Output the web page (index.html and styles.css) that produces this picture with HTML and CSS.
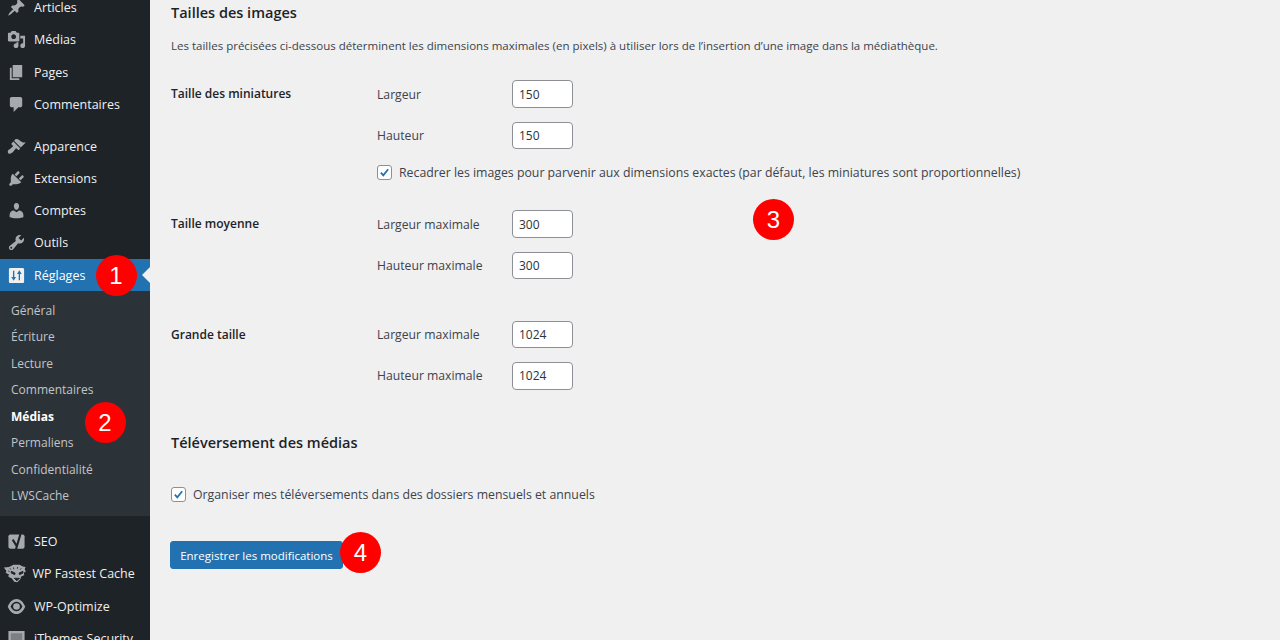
FILE: index.html
```html
<!DOCTYPE html>
<html lang="fr">
<head>
<meta charset="utf-8">
<title>Réglages des médias</title>
<link rel="stylesheet" href="styles.css">
</head>
<body>
<div class="app">
<nav class="side">
  <ul class="menu first">
    <li class="item"><svg class="ico" viewBox="0 0 20 20"><path d="M10.44 3.02l1.82-1.82 6.36 6.35-1.83 1.82c-1.05-.68-2.48-.57-3.41.36l-.75.75c-.92.93-1.04 2.35-.35 3.41l-1.83 1.82-2.41-2.41-2.8 2.79c-.42.42-3.38 2.71-3.8 2.29s1.86-3.39 2.28-3.81l2.79-2.79L4.1 9.36l1.83-1.82c1.05.69 2.48.57 3.4-.36l.75-.75c.93-.92 1.05-2.35.36-3.41z"/></svg>Articles</li>
    <li class="item"><svg class="ico" viewBox="0 0 20 20"><path d="M13 11V4c0-.55-.45-1-1-1h-1.67L9 1H5L3.67 3H2c-.55 0-1 .45-1 1v7c0 .55.45 1 1 1h10c.55 0 1-.45 1-1zM7 4.5c1.38 0 2.5 1.12 2.5 2.5S8.38 9.5 7 9.5 4.5 8.38 4.5 7 5.62 4.5 7 4.5zM14 6h5v10.5c0 1.38-1.12 2.5-2.5 2.5S14 17.88 14 16.5s1.12-2.5 2.5-2.5c.17 0 .34.02.5.05V9h-3V6zm-4 8.05V13h2v3.5c0 1.38-1.12 2.5-2.5 2.5S7 17.88 7 16.5 8.12 14 9.5 14c.17 0 .34.02.5.05z"/></svg>Médias</li>
    <li class="item"><svg class="ico" viewBox="0 0 20 20"><path d="M6 15V2h10v13H6zm-1 1h8v2H3V5h2v11z"/></svg>Pages</li>
    <li class="item"><svg class="ico" viewBox="0 0 20 20"><path d="M5 2h9c1.1 0 2 .9 2 2v7c0 1.1-.9 2-2 2h-2l-5 5v-5H5c-1.1 0-2-.9-2-2V4c0-1.1.9-2 2-2z"/></svg>Commentaires</li>
  </ul>
  <ul class="menu second">
    <li class="item"><svg class="ico" viewBox="0 0 20 20"><path d="M14.48 11.06L7.41 3.99l1.5-1.5c.5-.56 2.3-.47 3.51.32 1.21.8 1.43 1.28 2.91 2.1 1.18.64 2.45 1.26 4.45.85zm-.71.71L6.7 4.7 4.93 6.47c-.39.39-.39 1.02 0 1.41l1.06 1.06c.39.39.39 1.03 0 1.42-.6.6-1.43 1.11-2.21 1.69-.35.26-.7.53-1.01.84C1.43 13.26 0 15.6 1.4 17s3.74-.03 5.12-1.41c.31-.31.58-.66.84-1.01.58-.78 1.09-1.61 1.69-2.21.39-.39 1.02-.39 1.41 0l1.06 1.06c.39.39 1.02.39 1.41 0z"/></svg>Apparence</li>
    <li class="item"><svg class="ico" viewBox="0 0 20 20"><path d="M13.11 4.36L9.87 7.6 8 5.73l3.24-3.24c.35-.34 1.05-.2 1.56.32.52.51.66 1.21.31 1.55zm-8 1.77l.91-1.12 9.01 9.01-1.19.84c-.71.71-2.63 1.16-3.82 1.16H6.14L4.9 17.26c-.59.59-1.54.59-2.12 0-.59-.58-.59-1.53 0-2.12l1.24-1.24v-3.88c0-1.13.4-3.19 1.09-3.89zm7.26 3.97l3.24-3.24c.34-.35 1.04-.21 1.55.31.52.51.66 1.21.31 1.55l-3.24 3.25z"/></svg>Extensions</li>
    <li class="item"><svg class="ico" viewBox="0 0 20 20"><path d="M10 9.25c-2.27 0-2.73-3.44-2.73-3.44C7 4.02 7.82 2 9.97 2c2.16 0 2.98 2.02 2.71 3.81 0 0-.41 3.44-2.68 3.44zm0 2.57L12.72 10c2.39 0 4.52 2.33 4.52 4.53v2.49s-3.65 1.13-7.24 1.13c-3.65 0-7.24-1.13-7.24-1.13v-2.49c0-2.25 1.94-4.48 4.47-4.48z"/></svg>Comptes</li>
    <li class="item"><svg class="ico" viewBox="0 0 20 20"><path d="M16.68 9.77c-1.34 1.34-3.3 1.67-4.95.99l-5.41 6.52c-.99.99-2.59.99-3.58 0s-.99-2.59 0-3.57l6.52-5.42c-.68-1.65-.35-3.61.99-4.95 1.28-1.28 3.12-1.62 4.72-1.06l-2.89 2.89 2.82 2.82 2.86-2.87c.53 1.58.18 3.39-1.08 4.65zM3.81 16.21c.4.39 1.04.39 1.43 0 .4-.4.4-1.04 0-1.43-.39-.4-1.03-.4-1.43 0-.39.39-.39 1.03 0 1.43z"/></svg>Outils</li>
    <li class="item current"><svg class="ico" viewBox="0 0 20 20"><path fill-rule="evenodd" d="M3.500 2h13c.8 0 1.500.7 1.500 1.500v13c0 .8-.7 1.500-1.500 1.500h-13c-.8 0-1.500-.7-1.500-1.500v-13C2 2.700 2.700 2 3.500 2zM6.300 5v6.500H4.500L7 15.500l2.500-4H7.700V5zM13.700 15V8.500h1.800L13 4.500l-2.500 4h1.800V15z"/></svg>Réglages<span class="badge b1">1</span></li>
  </ul>
  <ul class="sub">
    <li>Général</li>
    <li>Écriture</li>
    <li>Lecture</li>
    <li>Commentaires</li>
    <li class="on">Médias<span class="badge b2">2</span></li>
    <li>Permaliens</li>
    <li>Confidentialité</li>
    <li>LWSCache</li>
  </ul>
  <ul class="menu third">
    <li class="item"><svg class="ico" viewBox="0 0 20 20"><path d="M3.500 2.500h13c1 0 2 1 2 2v11c0 1-1 2-2 2h-13c-1 0-2-1-2-2v-11c0-1 1-2 2-2z"/><path class="mark" d="M6 8l4 6.500M14.500 1l-5 17"/></svg>SEO</li>
    <li class="item"><svg class="ico wide" viewBox="0 0 30 24"><path d="M1 5l6-.5L12 2h7l4 2 3 .5-1 3 1.500 2-2.500 1.500.5 3-3.500 1.500-1 3-3.500 3.500-3.500-.5-3-4-3.500-1.500-.5-3-3-2 1-2L1 5z"/><path class="hole" d="M9.500 9.500l4.500 2-.5 1.800-4-1.800zM23 9.500l-4.500 2 .5 1.800 4-1.800zM13 17.500h6l-3 3zM8 6l1 1.500M12 5l.5 2M17 4.500l-.5 2M21 6l-1 1.500M6 9l1.500.7M5 13l2 .5"/></svg>WP Fastest Cache</li>
    <li class="item"><svg class="ico" viewBox="0 0 20 20"><circle cx="10" cy="10" r="3.500"/><path d="M.8 10C2.800 5 6 2 10 2s7.200 3 9.200 8h-3C14.800 6.700 12.700 5 10 5s-4.800 1.700-6.200 5zM.8 10c2 5 5.200 8 9.200 8s7.200-3 9.200-8h-3c-1.400 3.300-3.500 5-6.200 5s-4.800-1.700-6.200-5z"/></svg>WP-Optimize</li>
    <li class="item"><svg class="ico" viewBox="0 0 20 20"><path d="M1.500 2h17v9c0 3.800-3.700 6.500-8.500 8-4.800-1.500-8.500-4.200-8.500-8z"/><path class="inner" d="M4 4.500h12V11c0 2.600-2.500 4.700-6 5.900-3.500-1.200-6-3.300-6-5.900z"/></svg>iThemes Security</li>
  </ul>
</nav>
<main class="content">
  <h2 class="title first-title">Tailles des images</h2>
  <p class="intro">Les tailles précisées ci-dessous déterminent les dimensions maximales (en pixels) à utiliser lors de l’insertion d’une image dans la médiathèque.</p>

  <section class="row r-thumb">
    <h3 class="row-head">Taille des miniatures</h3>
    <div class="fields">
      <div class="field"><label class="lab">Largeur</label><input class="num" value="150" readonly></div>
      <div class="field"><label class="lab">Hauteur</label><input class="num" value="150" readonly></div>
      <div class="check in-row"><span class="box"><svg viewBox="0 0 16 16"><path d="M3.500 8.200l3 3.300 6-7.500" /></svg></span>Recadrer les images pour parvenir aux dimensions exactes (par défaut, les miniatures sont proportionnelles)</div>
    </div>
    <span class="badge b3">3</span>
  </section>

  <section class="row r-mid">
    <h3 class="row-head">Taille moyenne</h3>
    <div class="fields">
      <div class="field"><label class="lab">Largeur maximale</label><input class="num" value="300" readonly></div>
      <div class="field"><label class="lab">Hauteur maximale</label><input class="num" value="300" readonly></div>
    </div>
  </section>

  <section class="row r-large">
    <h3 class="row-head">Grande taille</h3>
    <div class="fields">
      <div class="field"><label class="lab">Largeur maximale</label><input class="num" value="1024" readonly></div>
      <div class="field"><label class="lab">Hauteur maximale</label><input class="num" value="1024" readonly></div>
    </div>
  </section>

  <h2 class="title upload-title">Téléversement des médias</h2>
  <div class="check upload"><span class="box"><svg viewBox="0 0 16 16"><path d="M3.500 8.200l3 3.300 6-7.500" /></svg></span>Organiser mes téléversements dans des dossiers mensuels et annuels</div>
  <div class="actions"><button class="save" type="button">Enregistrer les modifications</button><span class="badge b4">4</span></div>
</main>
</div>
</body>
</html>
```
FILE: styles.css
```css
* { box-sizing: border-box; }
html, body { margin: 0; padding: 0; height: 640px; overflow: hidden; }
body { background: #f0f0f1; font-family: "Open Sans", "Noto Sans", sans-serif; font-size: 12px; color: #3c434a; }
.app { display: flex; height: 640px; overflow: hidden; }
.side { width: 150px; flex: none; background: #1d2327; position: relative; height: 640px; overflow: hidden; }
ul { list-style: none; margin: 0; padding: 0; }
.menu.first { margin-top: -8.500px; }
.menu.second { margin-top: 9.500px; }
.menu.third { margin-top: 10px; }
.item { height: 32.250px; display: flex; align-items: center; padding-left: 7px; color: #f0f0f1; font-size: 12.500px; position: relative; }
.ico { width: 19px; height: 19px; margin-right: 8px; flex: none; fill: #a7aaad; }
.ico.wide { width: 26px; height: 21px; margin: 0 3.500px 0 -4px; }
.ico .hole { fill: #1d2327; stroke: #1d2327; stroke-width: 1; }
.ico .mark { fill: none; stroke: #1d2327; stroke-width: 2.200; }
.ico .inner { fill: #7d8083; }
.current { background: #2271b1; color: #fff; }
.current .ico { fill: #f0f0f1; }
.current::after { content: ""; position: absolute; right: 0; top: 50%; margin-top: -8px; border: 8px solid transparent; border-right-color: #f0f0f1; border-left-width: 0; }
.sub { background: #2c3338; padding: 6.700px 0 6.100px; color: #c3c4c7; font-size: 12px; }
.sub li { height: 26.450px; line-height: 26.450px; padding-left: 11px; position: relative; }
.sub .on { color: #fff; font-weight: 700; }
.badge { position: absolute; width: 41px; height: 41px; border-radius: 50%; background: #fe0000; color: #fff; font: 400 24px/41px "Liberation Sans", Arial, sans-serif; text-align: center; z-index: 2; }
.b1 { left: 95.500px; top: -4.500px; }
.b2 { left: 84.500px; top: -2px; }
.b3 { left: 582px; top: 119px; }
.b4 { left: 170px; top: -9.500px; }

.content { flex: 1; padding-left: 21px; position: relative; }
.title { margin: 0; font-size: 14.500px; font-weight: 600; color: #1d2327; line-height: 20px; }
.first-title { margin-top: 3.300px; }
.intro { margin: 13.700px 0 0; font-size: 11.520px; line-height: 18px; color: #3c434a; }
.row { display: flex; position: relative; }
.row-head { width: 206px; flex: none; margin: 0; font-size: 12px; line-height: 18px; font-weight: 600; color: #1d2327; padding-top: 5px; }
.fields { display: flex; flex-direction: column; gap: 13.800px; }
.field { display: flex; align-items: center; height: 27.500px; }
.lab { width: 135px; font-size: 12.200px; flex: none; }
.num { width: 61px; height: 27.500px; border: 1px solid #8c8f94; border-radius: 4px; background: #fff; color: #2c3338; font: 12px "Open Sans", sans-serif; padding: 0 6px; margin: 0; }
.r-thumb { margin-top: 25.500px; }
.r-mid { margin-top: 29.300px; }
.r-large { margin-top: 41.700px; }
.check { display: flex; align-items: center; font-size: 12.300px; }
.check.in-row { height: 18px; margin-top: 0; }
.box { width: 15px; height: 15px; border: 1px solid #8c8f94; border-radius: 3px; background: #fff; margin-right: 7px; flex: none; display: flex; }
.box svg { width: 13px; height: 13px; fill: none; stroke: #2271b1; stroke-width: 2.200; }
.upload-title { margin-top: 43.500px; }
.upload { margin-top: 32px; height: 18px; }
.actions { position: relative; margin-top: 38px; margin-left: -1px; }
.save { display: block; width: 173px; height: 28px; border: 1px solid #2271b1; border-radius: 3px; background: #2271b1; color: #fff; font: 11.500px "Open Sans", sans-serif; padding: 0; }
```
